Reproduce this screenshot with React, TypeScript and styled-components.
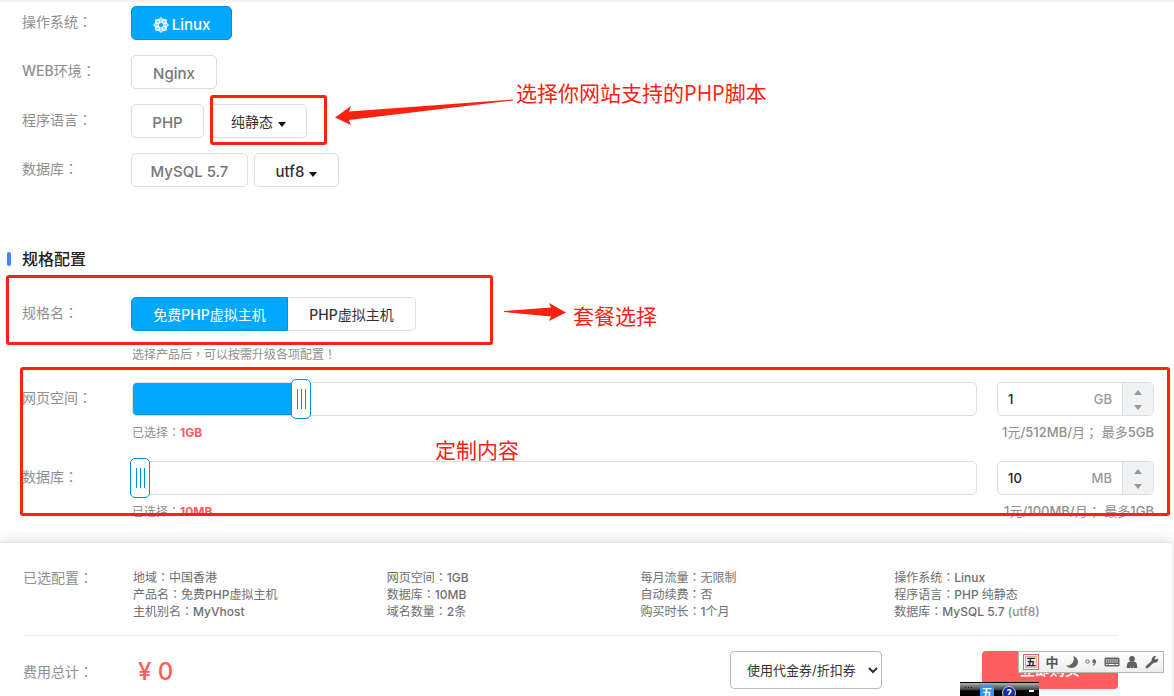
import React, { useState } from "react";
import styled, { createGlobalStyle, css } from "styled-components";

const latin = `Inter, "Noto Sans CJK SC", sans-serif`;
const red = "#ff2010";
const muted = "#8f8f8f";

const GlobalStyle = createGlobalStyle`
  * { box-sizing: border-box; }
  body {
    margin: 0;
    background: #fff;
    color: #888;
    font-family: ${latin};
    font-size: 14px;
    line-height: 20px;
    overflow: hidden;
  }
  button, input, select { font: inherit; margin: 0; }
  h2, p, ul { margin: 0; padding: 0; font: inherit; }
  ul { list-style: none; }
`;

const Page = styled.div`
  position: relative;
  display: flex;
  flex-direction: column;
  border-top: 2px solid #f4f4f4;
  min-height: 100vh;
`;

const Content = styled.main`
  padding: 4px 20px 0 22px;
`;

/* Full-width punctuation centred in its square */
const Mark = styled.span`
  font-family: "Noto Sans CJK TC", sans-serif;
  line-height: 1;
`;
const C = () => <Mark>：</Mark>;

const Latin = styled.b`
  font-weight: 500;
`;

/* Sets Latin runs a step heavier than the Chinese around them */
const mix = (text: string) =>
  text.split(/([A-Za-z0-9./ ]+)/).map((part, i) => (i % 2 ? <Latin key={i}>{part}</Latin> : part));

const Row = styled.div`
  display: grid;
  grid-template-columns: 109px minmax(0, 1fr);
  margin-bottom: 15px;
`;

const Label = styled.span`
  color: ${muted};
  line-height: 32px;
`;

const Options = styled.div<{ $joined?: boolean }>`
  display: flex;
  gap: ${(p) => (p.$joined ? 0 : 6)}px;
  ${(p) =>
    p.$joined &&
    css`
      button:first-child { border-radius: 5px 0 0 5px; }
      button:last-child { border-radius: 0 5px 5px 0; border-left: 0; }
    `}
`;

const Choice = styled.button<{ $on?: boolean; $dark?: boolean; $w: number; $size?: number }>`
  display: flex;
  align-items: center;
  justify-content: center;
  gap: 3px;
  width: ${(p) => p.$w}px;
  height: 34px;
  padding: ${(p) => (p.$size ? 2 : 4)}px 0 0;
  border: 1px solid ${(p) => (p.$on ? "#0090e0" : "#ddd")};
  border-radius: 5px;
  background: ${(p) => (p.$on ? "#00a8ff" : "#fff")};
  color: ${(p) => (p.$on ? "#fff" : p.$dark ? "#333" : "#777")};
  font-size: ${(p) => p.$size ?? 15}px;
  font-weight: ${(p) => (p.$size ? 400 : 500)};
  white-space: nowrap;
`;

const Caret = styled.i`
  margin: 4px 0 0 2px;
  border: 4px solid transparent;
  border-top: 5px solid #111;
  border-bottom: 0;
`;

const SectionTitle = styled.h2`
  display: flex;
  align-items: center;
  gap: 11px;
  margin: 62px 0 28px -15px;
  color: #222;
  font-size: 16px;
  font-weight: 500;
  line-height: 20px;
  &::before {
    content: "";
    width: 4px;
    height: 14px;
    border-radius: 2px;
    background: #4384ff;
  }
`;

const Hint = styled.p`
  color: ${muted};
  font-size: 12px;
  line-height: 18px;
  margin: 0 0 18px 110px;
`;

const SliderRow = styled.div`
  display: grid;
  grid-template-columns: 110px minmax(0, 1fr) 157px;
  margin-bottom: 18px;
`;

const SliderLabel = styled.label`
  color: ${muted};
  line-height: 32px;
`;

const Track = styled.div`
  display: grid;
  align-items: center;
  height: 34px;
  margin-right: 20px;
  border: 1px solid #ddd;
  border-radius: 5px;
`;

const Fill = styled.div`
  grid-area: 1 / 1;
  align-self: stretch;
  border-bottom: 1px solid #0090e0;
  border-radius: 4px 0 0 4px;
  background: #00a8ff;
`;

const Range = styled.input`
  grid-area: 1 / 1;
  height: 40px;
  margin: -4px -11px;
  appearance: none;
  background: transparent;
  &::-webkit-slider-thumb {
    appearance: none;
    width: 20px;
    height: 40px;
    border: 1px solid #0090e0;
    border-radius: 5px;
    background:
      linear-gradient(#0090e0, #0090e0) 5px 9px / 1px 20px no-repeat,
      linear-gradient(#0090e0, #0090e0) 9px 9px / 1px 20px no-repeat,
      linear-gradient(#0090e0, #0090e0) 13px 9px / 1px 20px no-repeat,
      #fff;
  }
`;

const Quantity = styled.div`
  display: flex;
  align-items: center;
  height: 34px;
  border: 1px solid #ddd;
  border-radius: 5px;
  overflow: hidden;
  color: #999;
  font-size: 13px;
  font-weight: 500;
`;

const QuantityInput = styled.input`
  flex: 1;
  min-width: 0;
  padding: 0 0 0 10px;
  border: 0;
  outline: 0;
  color: #222;
  background: none;
`;

const Stepper = styled.div`
  display: flex;
  flex-direction: column;
  width: 31px;
  height: 32px;
  margin-left: 10px;
  border-left: 1px solid #ddd;
  background: #f1f2f4;
`;

const Step = styled.button<{ $down?: boolean }>`
  flex: 1;
  display: grid;
  place-items: center;
  padding: ${(p) => (p.$down ? "1px 0 0" : "2px 0 0")};
  border: 0;
  background: none;
  &::before {
    content: "";
    border: 4px solid transparent;
    ${(p) =>
      p.$down
        ? "border-top: 5px solid #999; border-bottom: 0;"
        : "border-bottom: 5px solid #999; border-top: 0;"}
  }
`;

const Note = styled.p`
  grid-column: 2;
  margin-top: 6px;
  color: ${muted};
  font-size: 12px;
  line-height: 21px;
  white-space: nowrap;
  strong { color: #ff5c5c; font-weight: 700; }
`;

const RateNote = styled(Note)`
  grid-column: 3;
  justify-self: end;
  font-size: 13px;
`;

const Summary = styled.section`
  flex: 1;
  margin: 2px 1px 0 0;
  padding: 26px 24px 8px 23px;
  border-top: 1px solid #e4e4e4;
  border-right: 1px solid #eee;
  border-radius: 0 4px 0 0;
  box-shadow: 0 -2px 14px rgba(0, 0, 0, 0.12);
  background: #fff;
`;

const SummaryTop = styled.div`
  display: grid;
  grid-template-columns: 110px minmax(0, 1fr);
`;

const SummaryLabel = styled.span`
  color: ${muted};
  line-height: 17px;
`;

const Specs = styled.ul`
  display: grid;
  grid-template-columns: repeat(4, 1fr);
  grid-template-rows: repeat(3, 17px);
  grid-auto-flow: column;
  color: #6c6f73;
  font-size: 12px;
  line-height: 17px;
  white-space: nowrap;
  em { font-style: normal; font-weight: 500; color: #8c8c8c; }
`;

const Divider = styled.hr`
  margin: 15px 30px 15px 0;
  border: 0;
  border-top: 1px solid #ebebeb;
`;

const Checkout = styled.div`
  display: flex;
  align-items: center;
  margin-right: 30px;
  height: 38px;
`;

const TotalLabel = styled(SummaryLabel)`
  padding-top: 2px;
`;

const Price = styled.output`
  flex: 1;
  margin-left: 45px;
  padding-top: 4px;
  color: #ff5c5c;
  font-size: 24px;
  font-weight: 500;
  line-height: 38px;
`;

const Coupon = styled.select`
  width: 152px;
  height: 38px;
  margin-right: 100px;
  padding: 0 0 0 12px;
  border: 1px solid #bbb;
  border-radius: 4px;
  background: #fff;
  color: #333;
  font-size: 13px;
`;

const Buy = styled.button`
  width: 136px;
  height: 38px;
  border: 0;
  border-radius: 4px;
  background: #ff5f5f;
  color: #fff;
  font-size: 15px;
  font-weight: 500;
`;

const Frame = styled.div<{ $x: number; $y: number; $h: number; $w?: number }>`
  position: absolute;
  left: ${(p) => p.$x}px;
  top: ${(p) => p.$y}px;
  height: ${(p) => p.$h}px;
  ${(p) => (p.$w ? `width: ${p.$w}px;` : "right: 4px;")}
  border: 3px solid ${red};
  border-radius: 3px;
  pointer-events: none;
`;

const Callout = styled.span<{ $x: number; $y: number }>`
  position: absolute;
  left: ${(p) => p.$x}px;
  top: ${(p) => p.$y}px;
  color: ${red};
  font-family: "Open Sans", "Noto Sans CJK SC", sans-serif;
  font-size: 21px;
  line-height: 28px;
  white-space: nowrap;
`;

const Arrow = styled.svg<{ $x: number; $y: number }>`
  position: absolute;
  left: ${(p) => p.$x}px;
  top: ${(p) => p.$y}px;
  fill: ${red};
`;

const InputBar = styled.div`
  position: absolute;
  right: 10px;
  top: 649px;
  display: flex;
  align-items: center;
  justify-content: space-between;
  width: 146px;
  height: 22px;
  padding: 0 4px;
  border: 1px solid #b5b5b5;
  background: linear-gradient(#fff, #ededed);
  color: #555;
  font-family: "Noto Sans CJK SC", sans-serif;
  font-size: 13px;
  font-weight: 700;
  line-height: 16px;
`;

const Seal = styled.span`
  display: grid;
  place-items: center;
  width: 16px;
  height: 16px;
  border: 1px solid #d4695a;
  box-shadow: inset 0 0 0 1px #fff, inset 0 0 0 2px #e8a398;
  background: #f4e9e6;
  color: #222;
  font-size: 10px;
  line-height: 12px;
`;

const Tray = styled.div`
  position: absolute;
  left: 960px;
  top: 680px;
  display: flex;
  gap: 8px;
  width: 79px;
  height: 14px;
  padding: 3px 5px 0 4px;
  overflow: hidden;
  border-top: 1px solid #000;
  background: linear-gradient(#b0b0b0, #444 50%, #000 60%);
  color: #fff;
  font-family: "Noto Sans CJK SC", sans-serif;
  font-size: 11px;
  font-weight: 700;
  line-height: 13px;
`;

const Grip = styled.span`
  width: 8px;
  height: 12px;
  background: radial-gradient(circle, #111 1px, transparent 1px) 0 0 / 3px 3px;
`;

const TrayKey = styled.span<{ $round?: boolean }>`
  flex: none;
  width: 14px;
  height: 14px;
  border: ${(p) => (p.$round ? "1px solid #ccc" : "0")};
  border-radius: ${(p) => (p.$round ? "50%" : "2px")};
  background: ${(p) => (p.$round ? "#1c2a9c" : "#3392ff")};
  text-align: center;
`;

const TrayDash = styled.span`
  width: 5px;
  height: 2px;
  margin: 4px 0 0 5px;
  background: #fff;
`;

const Snowflake = () => (
  <svg width="16" height="16" viewBox="0 0 16 16" fill="#fff" fillOpacity=".6" stroke="#fff" strokeWidth=".9">
    {[0, 45, 90, 135, 180, 225, 270, 315].map((a) => (
      <path key={a} transform={`rotate(${a} 8 8)`} d="M8 .5L5.200 3.200L8 5.800L10.800 3.200Z" />
    ))}
  </svg>
);

const Moon = () => (
  <svg width="14" height="14" viewBox="0 0 14 14" fill="#666">
    <path d="M8.500 1C14 3 14.500 9.500 10 12C7 13.600 3 13 1 10.500C5.500 11 10 7.500 8.500 1Z" />
  </svg>
);

const Punctuation = () => (
  <svg width="12" height="12" viewBox="0 0 12 12">
    <circle cx="2.5" cy="5.500" r="1.700" fill="none" stroke="#666" />
    <path d="M7.500 4.500A1.800 1.800 0 0 1 11 5C11 7.500 10 9 8 10L7.800 9.300C8.800 8.600 9.200 7.800 9.100 7.100A1.800 1.800 0 0 1 7.500 4.500Z" fill="#666" />
  </svg>
);

const Keyboard = () => (
  <svg width="16" height="12" viewBox="0 0 16 12">
    <rect x=".5" y="1.500" width="15" height="9" rx="1.500" fill="#666" />
    <path d="M2 4H14M2 6H14" stroke="#fff" strokeDasharray="1.300 .8" />
    <path d="M2 8.500H3.500M4.500 8.500H10.500M11.500 8.500H14" stroke="#fff" />
  </svg>
);

const Person = () => (
  <svg width="12" height="14" viewBox="0 0 12 14" fill="#606060">
    <circle cx="6" cy="3.800" r="2.900" />
    <path d="M3.500 6.500H8.500C10.500 7 11.300 9 11.300 13H8V10.500L7.500 13H4.500L4 10.500V13H.7C.7 9 1.500 7 3.500 6.500Z" />
  </svg>
);

const Wrench = () => (
  <svg width="14" height="14" viewBox="0 0 14 14">
    <path d="M2 12L8.500 6" stroke="#606060" strokeWidth="2.800" strokeLinecap="round" />
    <path d="M11.200 1L9.500 3.200L10.700 4.600L13.200 3.500C13.500 6.500 11 8.500 8.500 7.600L6.600 5.500C6.300 2.800 8.500 .5 11.200 1Z" fill="#606060" />
  </svg>
);

type SliderProps = { id: string; name: string; start: number; max: number; unit: string; rate: string; limit: string };

function ResourceSlider({ id, name, start, max, unit, rate, limit }: SliderProps) {
  const [amount, setAmount] = useState(start);
  return (
    <SliderRow>
      <SliderLabel htmlFor={id}>{name}<C /></SliderLabel>
      <Track>
        <Fill style={{ width: `${(amount / max) * 100}%` }} />
        <Range id={id} type="range" min={0} max={max} value={amount} onChange={(e) => setAmount(Number(e.target.value))} />
      </Track>
      <Quantity>
        <QuantityInput aria-label={name} type="text" value={amount} onChange={(e) => setAmount(Number(e.target.value) || 0)} />
        <span>{unit}</span>
        <Stepper>
          <Step aria-label="增加" onClick={() => setAmount(Math.min(max, amount + 1))} />
          <Step $down aria-label="减少" onClick={() => setAmount(Math.max(0, amount - 1))} />
        </Stepper>
      </Quantity>
      <Note>已选择<C /><strong>{`${amount}${unit}`}</strong></Note>
      <RateNote>{mix(rate)}<Mark>；</Mark> {mix(limit)}</RateNote>
    </SliderRow>
  );
}

const specs: [string, string, string?][] = [
  ["地域", "中国香港"],
  ["产品名", "免费PHP虚拟主机"],
  ["主机别名", "MyVhost"],
  ["网页空间", "1GB"],
  ["数据库", "10MB"],
  ["域名数量", "2条"],
  ["每月流量", "", "无限制"],
  ["自动续费", "否"],
  ["购买时长", "1个月"],
  ["操作系统", "Linux"],
  ["程序语言", "PHP 纯静态"],
  ["数据库", "MySQL 5.7 ", "(utf8)"],
];

export default function App() {
  return (
    <Page>
      <GlobalStyle />
      <Content>
        <Row>
          <Label>操作系统<C /></Label>
          <Options><Choice $on $w={101}><Snowflake />Linux</Choice></Options>
        </Row>
        <Row>
          <Label>{mix("WEB环境")}<C /></Label>
          <Options><Choice $w={86}>Nginx</Choice></Options>
        </Row>
        <Row>
          <Label>程序语言<C /></Label>
          <Options>
            <Choice $w={73}>PHP</Choice>
            <Choice $dark $w={97} $size={14} aria-haspopup="listbox">纯静态<Caret /></Choice>
          </Options>
        </Row>
        <Row>
          <Label>数据库<C /></Label>
          <Options>
            <Choice $w={117}>MySQL 5.7</Choice>
            <Choice $dark $w={85} aria-haspopup="listbox">utf8<Caret /></Choice>
          </Options>
        </Row>

        <SectionTitle>规格配置</SectionTitle>
        <Row>
          <Label>规格名<C /></Label>
          <Options $joined>
            <Choice $on $w={157} $size={14}><span>{mix("免费PHP虚拟主机")}</span></Choice>
            <Choice $dark $w={128} $size={14}><span>{mix("PHP虚拟主机")}</span></Choice>
          </Options>
        </Row>
        <Hint>选择产品后<Mark>，</Mark>可以按需升级各项配置<Mark>！</Mark></Hint>

        <ResourceSlider id="web" name="网页空间" start={1} max={5} unit="GB" rate="1元/512MB/月" limit="最多5GB" />
        <ResourceSlider id="db" name="数据库" start={10} max={1024} unit="MB" rate="1元/100MB/月" limit="最多1GB" />
      </Content>

      <Summary>
        <SummaryTop>
          <SummaryLabel>已选配置<C /></SummaryLabel>
          <Specs>
            {specs.map(([name, value, extra], i) => (
              <li key={i}>{name}<C />{mix(value)}{extra && <em>{extra}</em>}</li>
            ))}
          </Specs>
        </SummaryTop>
        <Divider />
        <Checkout>
          <TotalLabel>费用总计<C /></TotalLabel>
          <Price>¥ 0</Price>
          <Coupon aria-label="优惠"><option>使用代金券/折扣券</option></Coupon>
          <Buy>立即购买</Buy>
        </Checkout>
      </Summary>

      <Frame $x={210} $y={93} $w={117} $h={50} />
      <Frame $x={6} $y={273} $w={487} $h={70} />
      <Frame $x={20} $y={365} $h={149} />
      <Arrow $x={335} $y={96} width="180" height="30"><path d="M0 19.500L16 8L14 13.500L178 1.500V2.500L14 22L16 27Z" /></Arrow>
      <Arrow $x={503} $y={300} width="64" height="22"><path d="M1 9L48 5.500L46 1L63 10.500L46 19L48 14.500L1 10Z" /></Arrow>
      <Callout $x={516} $y={77}>选择你网站支持的PHP脚本</Callout>
      <Callout $x={573} $y={300}>套餐选择</Callout>
      <Callout $x={435} $y={434}>定制内容</Callout>
      <InputBar>
        <Seal>五</Seal>
        <span>中</span>
        <Moon />
        <Punctuation />
        <Keyboard />
        <Person />
        <Wrench />
      </InputBar>
      <Tray>
        <Grip />
        <TrayKey>五</TrayKey>
        <TrayKey $round>?</TrayKey>
        <TrayDash />
      </Tray>
    </Page>
  );
}
